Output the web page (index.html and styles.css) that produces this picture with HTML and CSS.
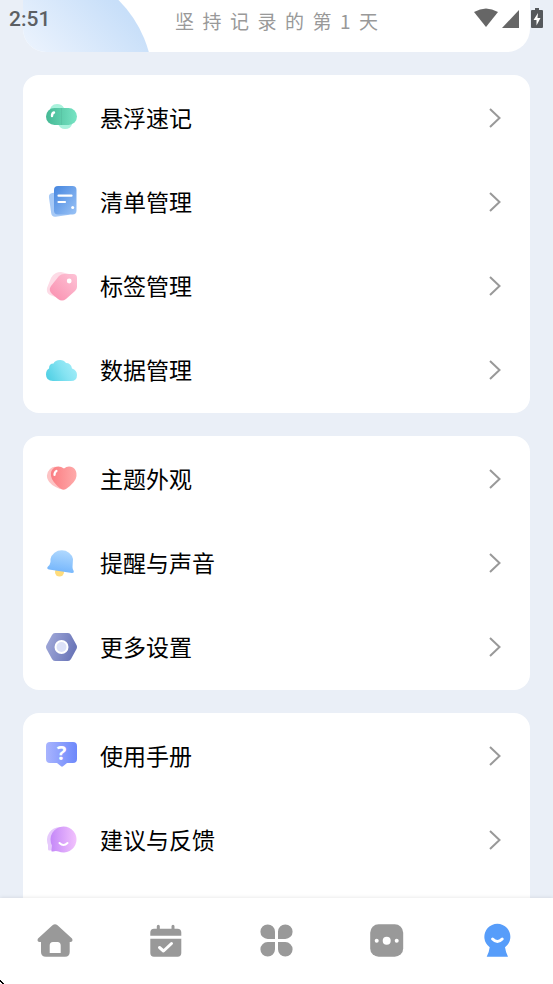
FILE: index.html
```html
<!DOCTYPE html>
<html lang="zh-CN">
<head>
<meta charset="utf-8">
<meta name="viewport" content="width=device-width, initial-scale=1">
<title>我的</title>
<link rel="stylesheet" href="styles.css">
</head>
<body>
<div class="app">
  <header class="status">
    <time class="clock">2:51</time>
    <svg class="wifi" width="24" height="20" viewBox="0 0 24 20"><path d="M0 4Q12-3 24 4L12 19Z"/></svg>
    <svg class="signal" width="17" height="20" viewBox="0 0 17 20"><path d="M17 2V20H0Z"/></svg>
    <svg class="battery" width="12" height="20" viewBox="0 0 12 20"><path d="M4 0h4v2h3q1 0 1 1v16q0 1-1 1H1q-1 0-1-1V3q0-1 1-1h3z"/><path class="bolt" d="M7 5L2.500 12H5.500V17.500L9.500 10H6.500Z"/></svg>
  </header>

  <main class="content">
    <section class="card streak"><p class="streak-text">坚  持  记  录  的  第  1  天</p></section>

    <section class="card">
      <a class="row" href="#float">
        <svg class="icon" viewBox="0 0 32 32"><defs><linearGradient id="g1"><stop offset="0" stop-color="#45b894"/><stop offset="1" stop-color="#78e4c4"/></linearGradient></defs><path d="M3 11Q4 2 11 2Q16 2 18 6Q27 8 26 22Q25 27 19 27Q14 27 12 22Z" fill="#a9f2dc"/><rect y="6" width="31" height="17" rx="8.500" fill="url(#g1)"/><path d="M15.500 6v17" stroke="#58bea1" stroke-width=".6"/><path d="M6 14Q6 11 8 10.500" fill="none" stroke="#fff" stroke-width="2.400" stroke-linecap="round"/></svg>
        <span class="label">悬浮速记</span>
        <svg class="arrow" viewBox="0 0 12 20"><path d="M1 1L10.500 10L1 19"/></svg>
      </a>
      <a class="row" href="#lists">
        <svg class="icon" viewBox="0 0 32 32"><defs><linearGradient id="g2" x2="1" y2="1"><stop offset="0" stop-color="#4686df"/><stop offset="1" stop-color="#9ac3f6"/></linearGradient></defs><rect x="4" y="6" width="20" height="24" rx="4" transform="rotate(-8 14 18)" fill="#a6c9f6"/><rect x="8" width="22.500" height="28.500" rx="4" fill="url(#g2)"/><path d="M12.500 9.700H25.500M12.500 16H19" stroke="#fff" stroke-width="2.200" stroke-linecap="round"/><circle cx="26.700" cy="21.500" r="1.500" fill="#fff"/></svg>
        <span class="label">清单管理</span>
        <svg class="arrow" viewBox="0 0 12 20"><path d="M1 1L10.500 10L1 19"/></svg>
      </a>
      <a class="row" href="#tags">
        <svg class="icon" viewBox="0 0 32 32"><defs><linearGradient id="g3" x1="0" y1="1" x2="1" y2="0"><stop offset="0" stop-color="#fa8eae"/><stop offset="1" stop-color="#fdc3d6"/></linearGradient></defs><path d="M10 3Q12 2 15 2L23 4Q28 6 27 11L20 26Q17 30 12 28L4 25Q0 23 1 18L5 8Q6 5 10 3Z" fill="#fddbe6"/><path d="M18 4H27Q31 4 31 8V17Q31 19 29 21L20 29Q16 32 12 29L6 24Q2 20 5 16L13 6Q15 4 18 4Z" fill="url(#g3)"/><circle cx="23.200" cy="11" r="2.400" fill="#fff"/></svg>
        <span class="label">标签管理</span>
        <svg class="arrow" viewBox="0 0 12 20"><path d="M1 1L10.500 10L1 19"/></svg>
      </a>
      <a class="row" href="#data">
        <svg class="icon" viewBox="0 0 32 32"><defs><linearGradient id="g4" x1="0" y1="1" x2="1" y2=".6"><stop offset="0" stop-color="#48cde2"/><stop offset=".65" stop-color="#86e3f2"/><stop offset="1" stop-color="#9debf7"/></linearGradient></defs><path d="M7 27Q0 27 0 20.500Q0 16 3 14.500Q3 9.500 7.500 9.500Q9 6 14 6Q18 6 20 9Q25 9 26 14.500Q31 16 31 21Q31 27 25 27Z" fill="url(#g4)"/></svg>
        <span class="label">数据管理</span>
        <svg class="arrow" viewBox="0 0 12 20"><path d="M1 1L10.500 10L1 19"/></svg>
      </a>
    </section>

    <section class="card">
      <a class="row" href="#theme">
        <svg class="icon" viewBox="0 0 32 32"><defs><linearGradient id="g5"><stop offset="0" stop-color="#fb7d82"/><stop offset="1" stop-color="#feaaaa"/></linearGradient></defs><path d="M13 5Q8 2 4 6Q-1 11 2 17Q4 22 14 26L20 20Z" fill="#fdc3c4"/><path d="M18 5.500Q13 2 8.500 4.500Q4 7.500 5 13Q6 19 15 26Q17.500 27.500 20 26Q30 19 30.500 13Q31 7 27 4.500Q22 2 18 5.500Z" fill="url(#g5)"/><path d="M8.500 12Q8.500 9 10.500 8" fill="none" stroke="#fff" stroke-width="2.200" stroke-linecap="round"/></svg>
        <span class="label">主题外观</span>
        <svg class="arrow" viewBox="0 0 12 20"><path d="M1 1L10.500 10L1 19"/></svg>
      </a>
      <a class="row" href="#sound">
        <svg class="icon" viewBox="0 0 32 32"><defs><linearGradient id="g6" x1=".7" y1="0" x2=".5" y2="1"><stop offset="0" stop-color="#b1d9fe"/><stop offset="1" stop-color="#73b5fc"/></linearGradient></defs><circle cx="13.500" cy="25" r="4.500" fill="#ffdc7c"/><path d="M4.500 12A11.500 11 0 0 1 27 12L26.500 20Q26.500 22 27.500 23.500Q28.500 26 26 26L3 22.500Q0 21.500 2 19.500Q4 18 4.500 15Z" fill="url(#g6)"/></svg>
        <span class="label">提醒与声音</span>
        <svg class="arrow" viewBox="0 0 12 20"><path d="M1 1L10.500 10L1 19"/></svg>
      </a>
      <a class="row" href="#settings">
        <svg class="icon" viewBox="0 0 32 32"><defs><linearGradient id="g7" x2="1" y2=".3"><stop offset="0" stop-color="#a4acdb"/><stop offset="1" stop-color="#6c77b9"/></linearGradient></defs><path d="M9 2H22Q24 2 25 4L30.500 14Q31.500 16 30.500 18L25 28Q24 30 22 30H9Q7 30 6 28L.5 18Q-.5 16 .5 14L6 4Q7 2 9 2Z" fill="url(#g7)"/><circle cx="15.500" cy="16" r="7" fill="#fff"/><circle cx="15.500" cy="16" r="5" fill="#dce1f8"/></svg>
        <span class="label">更多设置</span>
        <svg class="arrow" viewBox="0 0 12 20"><path d="M1 1L10.500 10L1 19"/></svg>
      </a>
    </section>

    <section class="card card-last">
      <a class="row" href="#manual">
        <svg class="icon" viewBox="0 0 32 32"><defs><linearGradient id="g8"><stop offset="0" stop-color="#a8b4fe"/><stop offset="1" stop-color="#6d88fb"/></linearGradient></defs><path d="M4 2H27Q31 2 31 6V19Q31 23 27 23H21L17 26.300Q16 27 15 26.300L11 23H4Q0 23 0 19V6Q0 2 4 2Z" fill="url(#g8)"/><text class="icon-mark" x="15.500" y="20">?</text></svg>
        <span class="label">使用手册</span>
        <svg class="arrow" viewBox="0 0 12 20"><path d="M1 1L10.500 10L1 19"/></svg>
      </a>
      <a class="row" href="#feedback">
        <svg class="icon" viewBox="0 0 32 32"><defs><linearGradient id="g9"><stop offset="0" stop-color="#c488f8"/><stop offset="1" stop-color="#f2c2fd"/></linearGradient></defs><path d="M14 3A13 13 0 0 0 2 21V25Q2 27 4 26.500L17 24Z" fill="#e6cafc"/><path d="M17.500 2.500A13 13 0 1 1 12.500 27.500Q10 26.500 7 27.500Q5 28 5.500 25.500L6 21.500A13 13 0 0 1 17.500 2.500Z" fill="url(#g9)"/><path d="M13.500 19Q17.500 23 21.500 19" fill="none" stroke="#fff" stroke-width="2" stroke-linecap="round"/></svg>
        <span class="label">建议与反馈</span>
        <svg class="arrow" viewBox="0 0 12 20"><path d="M1 1L10.500 10L1 19"/></svg>
      </a>
    </section>
  </main>

  <nav class="tabs">
    <a class="tab" href="#home" aria-label="首页"><svg viewBox="0 0 36 36"><path fill-rule="evenodd" d="M15.500 2.200Q18 .4 20.500 2.200L35 15.500Q36.500 18.500 33.500 19H32.700V29Q32.700 33.700 28 33.700H9Q4 33.700 4 29V19H2.500Q-.5 18.500 1 15.500ZM16 19Q12.700 19 12.700 22.500V30H23.700V22.500Q23.700 19 20.500 19Z"/></svg></a>
    <a class="tab" href="#calendar" aria-label="日历"><svg viewBox="0 0 36 36"><path d="M2.300 12.700V9.500Q2.300 5.700 6 5.700H8.800V3.200Q8.800 1.700 10.300 1.700T11.800 3.200V5.700H23.500V3.200Q23.500 1.700 25 1.700T26.500 3.200V5.700H29.500Q33.300 5.700 33.300 9.500V12.700ZM2.300 15.700H33.300V30Q33.300 33.700 29.500 33.700H6Q2.300 33.700 2.300 30Z"/><path class="cut-line" d="M11.500 24.500L15.500 28L23.500 20.500"/></svg></a>
    <a class="tab" href="#apps" aria-label="应用"><svg viewBox="0 0 36 36"><path d="M17 16H9.700A7.300 7.300 0 1 1 17 8.700ZM20 16V8.700A7.300 7.300 0 1 1 27.300 16ZM17 19V26.300A7.300 7.300 0 1 1 9.700 19ZM20 19H27.300A7.300 7.300 0 1 1 20 26.300Z"/></svg></a>
    <a class="tab" href="#more" aria-label="更多"><svg viewBox="0 0 36 36"><rect x="1.200" y="1.200" width="33" height="32.500" rx="8.500"/><g class="cut"><circle cx="7.700" cy="17.700" r="2"/><circle cx="17.700" cy="17.700" r="4"/><circle cx="27.700" cy="17.700" r="2"/></g></svg></a>
    <a class="tab tab-active" href="#me" aria-label="我的" aria-current="page"><svg viewBox="0 0 36 36"><path d="M9.700 24.300A13 13 0 1 1 25 24.300Q25.500 28.500 28 33.700H6.700Q9.300 28.500 9.700 24.300Z"/><path class="cut-line" d="M12.600 16Q17.400 21 22.200 16"/></svg></a>
  </nav>
  <svg class="pointer" viewBox="0 0 4 4"><path d="M0 0h1v1h1v1h1v1h1v1h-2v-1h-1v-1h-1z"/></svg>
</div>
</body>
</html>
```
FILE: styles.css
```css
* {
  box-sizing: border-box;
}

body {
  margin: 0;
  background: #eaeff7;
  color: #000;
  font-family: "Noto Sans CJK SC", sans-serif;
}

a {
  color: inherit;
  text-decoration: none;
}

.app {
  position: relative;
  display: flex;
  flex-direction: column;
  height: 100vh;
}

/* Status bar floats over the scrolled page */
.status {
  position: absolute;
  inset: 0 0 auto;
  z-index: 2;
  display: flex;
  align-items: center;
  height: 36px;
  padding: 0 10px 0 9px;
  fill: #666;
}

.clock {
  flex: 1;
  padding-top: 2px;
  color: #5c5f63;
  font: 500 21px/24px Roboto, sans-serif;
}

.signal {
  margin: 0 12px 0 4px;
}

.battery {
  fill: #55585c;
}

.bolt {
  fill: #fff;
}

.content {
  display: flex;
  flex: 1;
  flex-direction: column;
  gap: 23px;
  min-height: 0;
  padding: 0 23px;
  overflow-y: auto;
  scrollbar-width: none;
}

.card {
  flex-shrink: 0;
  padding: 1px 0;
  border-radius: 16px;
  background: #fff;
}

.card-last {
  flex-grow: 1;
  border-radius: 16px 16px 0 0;
}

.streak {
  position: relative;
  padding: 7px 0 17px;
  border-radius: 0 0 23px 23px;
  overflow: hidden;
}

.streak::before {
  content: "";
  position: absolute;
  top: -34px;
  left: -104px;
  width: 234px;
  height: 234px;
  border-radius: 50%;
  background: linear-gradient(45deg, #fff 35%, #e8f1fd 58%, #c8dff9 84%);
}

.streak-text {
  position: relative;
  margin: 0;
  color: #999;
  font-size: 19px;
  line-height: 28px;
  text-align: center;
  white-space: pre;
}

.row {
  display: flex;
  align-items: center;
  height: 84px;
  padding: 0 29px 0 23px;
}

.icon {
  width: 32px;
  height: 32px;
  margin-right: 22px;
}

.icon-mark {
  fill: #fff;
  font: 700 20px "Noto Sans", sans-serif;
  text-anchor: middle;
}

.label {
  flex: 1;
  padding-bottom: 2px;
  font-size: 23px;
  line-height: 32px;
}

.arrow {
  width: 12px;
  height: 20px;
  fill: none;
  stroke: #999;
  stroke-width: 2;
}

.tabs {
  z-index: 1;
  display: flex;
  height: 86px;
  background: #fff;
  box-shadow: 0 0 4px rgba(0, 0, 0, 0.12);
}

.tab {
  display: flex;
  flex: 1;
  align-items: center;
  justify-content: center;
  fill: #999;
}

.tab svg {
  width: 36px;
  height: 36px;
}

.tab-active {
  fill: #579dfa;
}

.cut {
  fill: #fff;
}

.cut-line {
  fill: none;
  stroke: #fff;
  stroke-width: 3;
  stroke-linecap: round;
  stroke-linejoin: round;
}

.pointer {
  position: absolute;
  bottom: 0;
  left: 0;
  z-index: 3;
  width: 4px;
  height: 4px;
}
```
